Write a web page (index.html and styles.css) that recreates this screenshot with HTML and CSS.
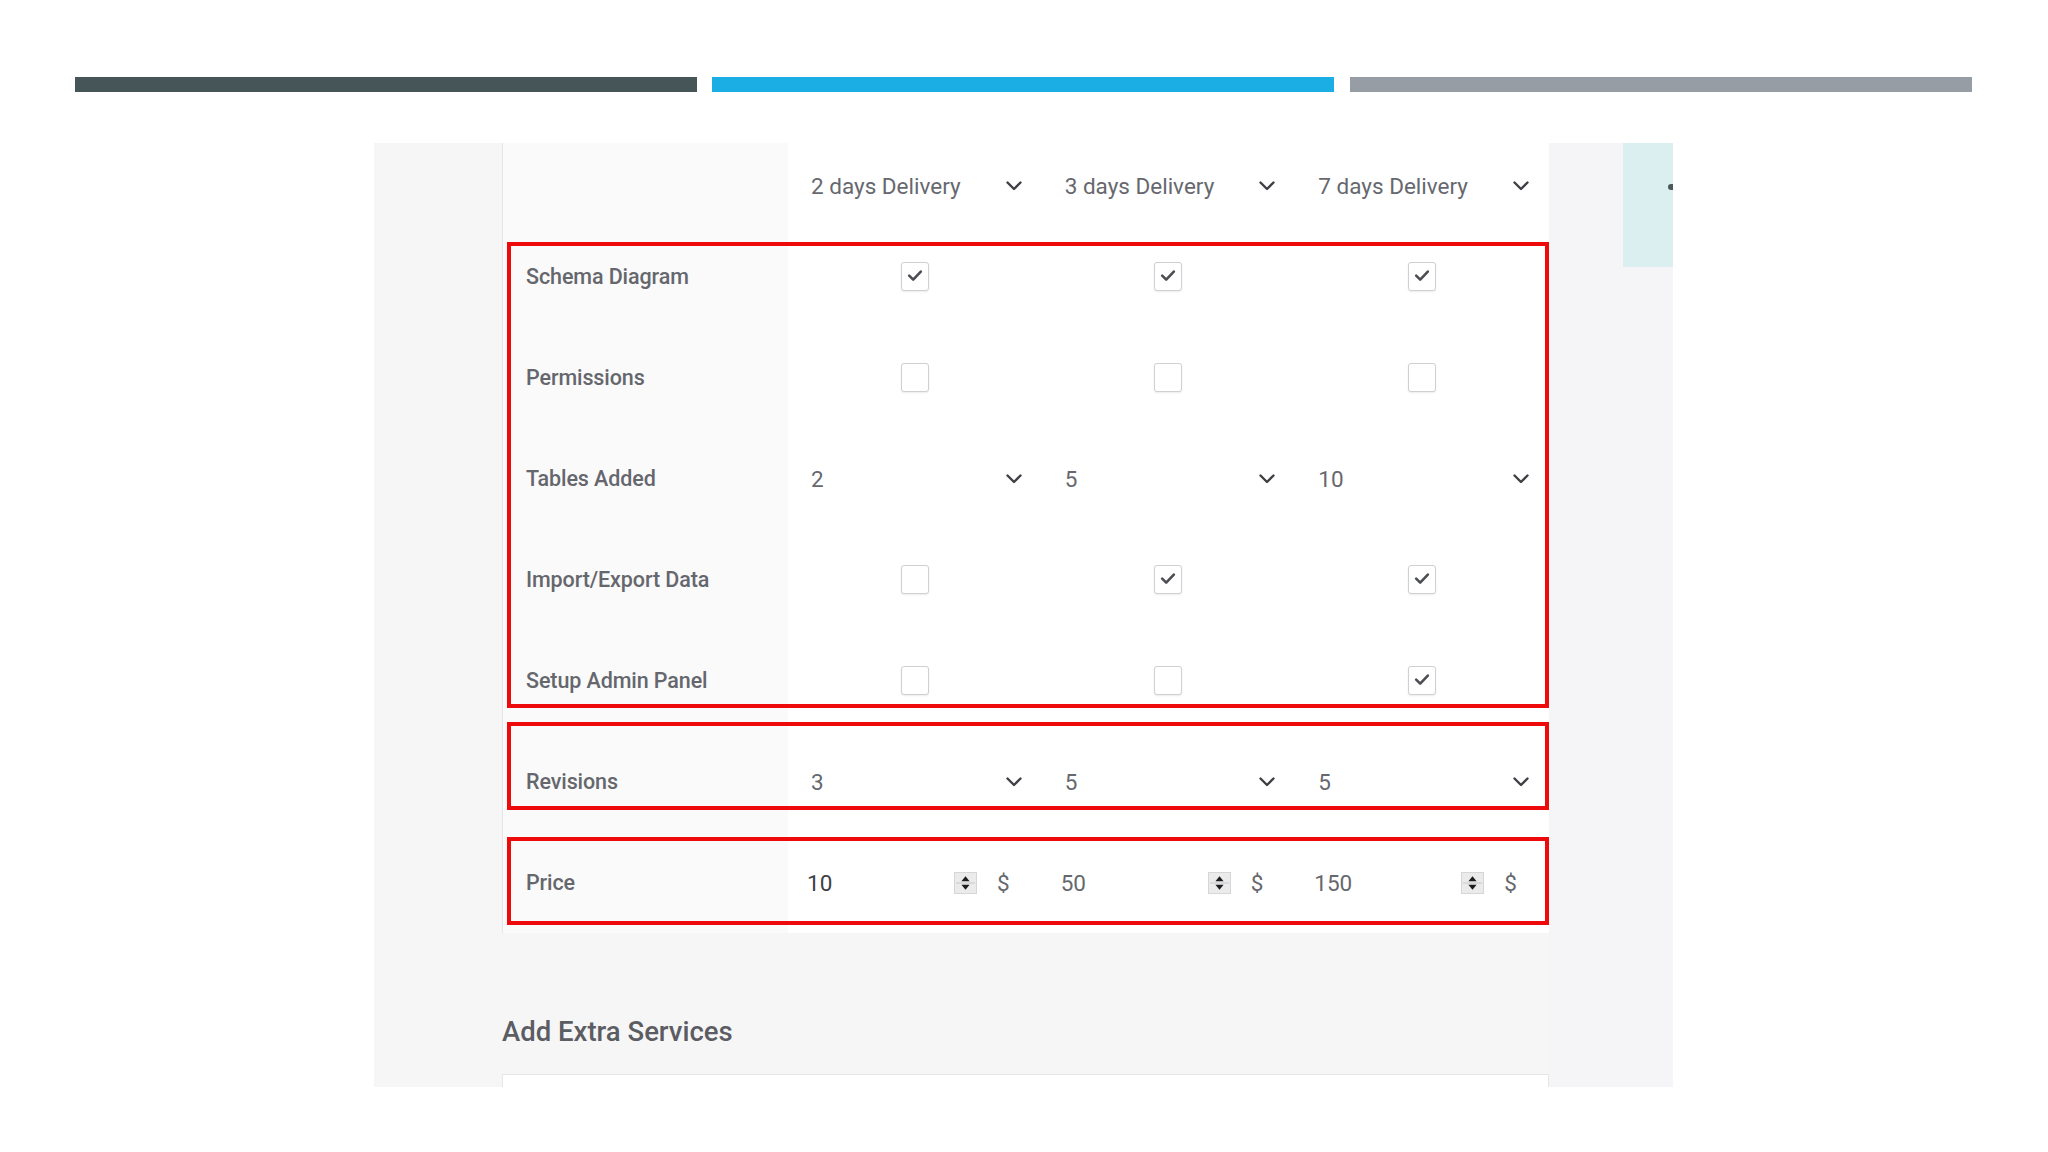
FILE: index.html
```html
<!DOCTYPE html>
<html lang="en">
<head>
<meta charset="utf-8">
<title>Packages</title>
<link rel="stylesheet" href="styles.css">
</head>
<body>
<div class="slide">
  <div class="bars">
    <div class="bar bar-dark"></div>
    <div class="bar bar-blue"></div>
    <div class="bar bar-gray"></div>
  </div>

  <div class="panel">
    <div class="gutter"></div>
    <div class="main">
      <div class="card">
        <div class="grid">
          <div class="label head"></div>
          <div class="cell select head"><span>2 days Delivery</span><svg class="chev" viewBox="0 0 16 10"><path d="M1.5 1.5 L8 8 L14.5 1.5"/></svg></div>
          <div class="cell select head"><span>3 days Delivery</span><svg class="chev" viewBox="0 0 16 10"><path d="M1.5 1.5 L8 8 L14.5 1.5"/></svg></div>
          <div class="cell select head"><span>7 days Delivery</span><svg class="chev" viewBox="0 0 16 10"><path d="M1.5 1.5 L8 8 L14.5 1.5"/></svg></div>

          <div class="label">Schema Diagram</div>
          <div class="cell center"><span class="cb"><svg viewBox="0 0 29 29"><path d="M8 13.5 L12.5 18 L21 9"/></svg></span></div>
          <div class="cell center"><span class="cb"><svg viewBox="0 0 29 29"><path d="M8 13.5 L12.5 18 L21 9"/></svg></span></div>
          <div class="cell center"><span class="cb"><svg viewBox="0 0 29 29"><path d="M8 13.5 L12.5 18 L21 9"/></svg></span></div>

          <div class="label">Permissions</div>
          <div class="cell center"><span class="cb"></span></div>
          <div class="cell center"><span class="cb"></span></div>
          <div class="cell center"><span class="cb"></span></div>

          <div class="label">Tables Added</div>
          <div class="cell select"><span>2</span><svg class="chev" viewBox="0 0 16 10"><path d="M1.5 1.5 L8 8 L14.5 1.5"/></svg></div>
          <div class="cell select"><span>5</span><svg class="chev" viewBox="0 0 16 10"><path d="M1.5 1.5 L8 8 L14.5 1.5"/></svg></div>
          <div class="cell select"><span>10</span><svg class="chev" viewBox="0 0 16 10"><path d="M1.5 1.5 L8 8 L14.5 1.5"/></svg></div>

          <div class="label">Import/Export Data</div>
          <div class="cell center"><span class="cb"></span></div>
          <div class="cell center"><span class="cb"><svg viewBox="0 0 29 29"><path d="M8 13.5 L12.5 18 L21 9"/></svg></span></div>
          <div class="cell center"><span class="cb"><svg viewBox="0 0 29 29"><path d="M8 13.5 L12.5 18 L21 9"/></svg></span></div>

          <div class="label">Setup Admin Panel</div>
          <div class="cell center"><span class="cb"></span></div>
          <div class="cell center"><span class="cb"></span></div>
          <div class="cell center"><span class="cb"><svg viewBox="0 0 29 29"><path d="M8 13.5 L12.5 18 L21 9"/></svg></span></div>

          <div class="label">Revisions</div>
          <div class="cell select"><span>3</span><svg class="chev" viewBox="0 0 16 10"><path d="M1.5 1.5 L8 8 L14.5 1.5"/></svg></div>
          <div class="cell select"><span>5</span><svg class="chev" viewBox="0 0 16 10"><path d="M1.5 1.5 L8 8 L14.5 1.5"/></svg></div>
          <div class="cell select"><span>5</span><svg class="chev" viewBox="0 0 16 10"><path d="M1.5 1.5 L8 8 L14.5 1.5"/></svg></div>

          <div class="label">Price</div>
          <div class="cell price"><span class="num num-dark">10</span><span class="spin"><svg viewBox="0 0 23 22"><path class="tri" d="M7 9 L11.5 3.5 L16 9 Z"/><path class="mid" d="M1 11 H22"/><path class="tri" d="M7 13 L11.5 18.5 L16 13 Z"/></svg></span><span class="cur">$</span></div>
          <div class="cell price"><span class="num">50</span><span class="spin"><svg viewBox="0 0 23 22"><path class="tri" d="M7 9 L11.5 3.5 L16 9 Z"/><path class="mid" d="M1 11 H22"/><path class="tri" d="M7 13 L11.5 18.5 L16 13 Z"/></svg></span><span class="cur">$</span></div>
          <div class="cell price"><span class="num">150</span><span class="spin"><svg viewBox="0 0 23 22"><path class="tri" d="M7 9 L11.5 3.5 L16 9 Z"/><path class="mid" d="M1 11 H22"/><path class="tri" d="M7 13 L11.5 18.5 L16 13 Z"/></svg></span><span class="cur">$</span></div>
        </div>

        <div class="mark mark-features"></div>
        <div class="mark mark-revisions"></div>
        <div class="mark mark-price"></div>
      </div>

      <h2 class="extra-title">Add Extra Services</h2>
      <div class="extra-box"></div>
    </div>
    <div class="aside">
      <div class="teal"><span class="dot"></span></div>
    </div>
  </div>
</div>
</body>
</html>
```

FILE: styles.css
```css
* { box-sizing: border-box; }

html, body {
  margin: 0;
  padding: 0;
  background: #ffffff;
}

body {
  font-family: Roboto, "Liberation Sans", Arial, sans-serif;
  color: #62646a;
}

.slide {
  width: 2048px;
  height: 1152px;
  overflow: hidden;
  background: #ffffff;
}

/* top bars */
.bars {
  display: flex;
  gap: 15px;
  padding: 77px 0 0 75px;
}

.bar {
  width: 622px;
  height: 15px;
}

.bar-dark { background: #465558; }
.bar-blue { background: #1baee4; margin-right: 1px; }
.bar-gray { background: #969da4; }

/* screenshot panel */
.panel {
  margin: 51px 0 0 374px;
  width: 1299px;
  height: 944px;
  background: #f6f6f7;
  display: flex;
  overflow: hidden;
}

.gutter {
  width: 128px;
  flex: none;
}

.main {
  width: 1047px;
  flex: none;
}

.aside {
  flex: 1;
  display: flex;
  justify-content: flex-end;
  background: #f5f5f7;
}

.teal {
  position: relative;
  width: 50px;
  height: 124px;
  background: #dbeef0;
}

.dot {
  position: absolute;
  right: 0;
  top: 41px;
  width: 5px;
  height: 6px;
  border-radius: 3px 0 0 3px;
  background: #4a5a5c;
}

/* card */
.card {
  position: relative;
  background: #ffffff;
  border-left: 1px solid #e6e6e8;
}

.grid {
  display: grid;
  grid-template-columns: 285px repeat(3, 1fr);
  grid-template-rows: 83px repeat(7, 101px);
}

.label {
  background: #fafafb;
  display: flex;
  align-items: center;
  padding-left: 23px;
  font-size: 21.5px;
  font-weight: 500;
  letter-spacing: -0.1px;
  color: #65676d;
}

.cell {
  display: flex;
  align-items: center;
  font-size: 22.5px;
}

.select {
  justify-content: space-between;
  padding: 0 20px 0 23px;
  color: #66686e;
}

.select.head {
  padding-top: 2px;
}

.chev {
  width: 16px;
  height: 10px;
  fill: none;
  stroke: #3f4045;
  stroke-width: 2.4;
  stroke-linecap: round;
  stroke-linejoin: round;
}

.center {
  justify-content: center;
}

.cb {
  width: 28px;
  height: 29px;
  border: 1.5px solid #cfd0d3;
  border-radius: 3px;
  background: #ffffff;
  box-shadow: 0 1px 2px rgba(0, 0, 0, 0.08);
  display: flex;
}

.cb svg {
  width: 100%;
  height: 100%;
  fill: none;
  stroke: #4d4e53;
  stroke-width: 2.9;
  stroke-linecap: round;
  stroke-linejoin: round;
}

.price {
  padding-left: 19px;
}

.num {
  width: 147px;
  color: #66686e;
}

.num-dark {
  color: #404145;
}

.spin {
  width: 23px;
  height: 22px;
  flex: none;
  background: #ebebec;
  border: 1px solid #d6d6d8;
  display: flex;
}

.spin svg {
  width: 100%;
  height: 100%;
}

.spin .tri { fill: #1d1d1f; }
.spin .mid { stroke: #c4c4c6; stroke-width: 1; }

.cur {
  margin-left: 20px;
  color: #66686e;
}

/* red annotation outlines */
.mark {
  position: absolute;
  left: 4px;
  width: 1042px;
  border: 4px solid #ee0a0a;
  pointer-events: none;
}

.mark-features { top: 99px; height: 466px; }
.mark-revisions { top: 579px; height: 88px; }
.mark-price { top: 694px; height: 88px; }

/* extra services */
.extra-title {
  margin: 83px 0 0 0;
  font-size: 27.5px;
  line-height: 32px;
  font-weight: 500;
  color: #5b5d63;
}

.extra-box {
  margin-top: 26px;
  height: 40px;
  background: #ffffff;
  border: 1px solid #e6e6e8;
}
```
